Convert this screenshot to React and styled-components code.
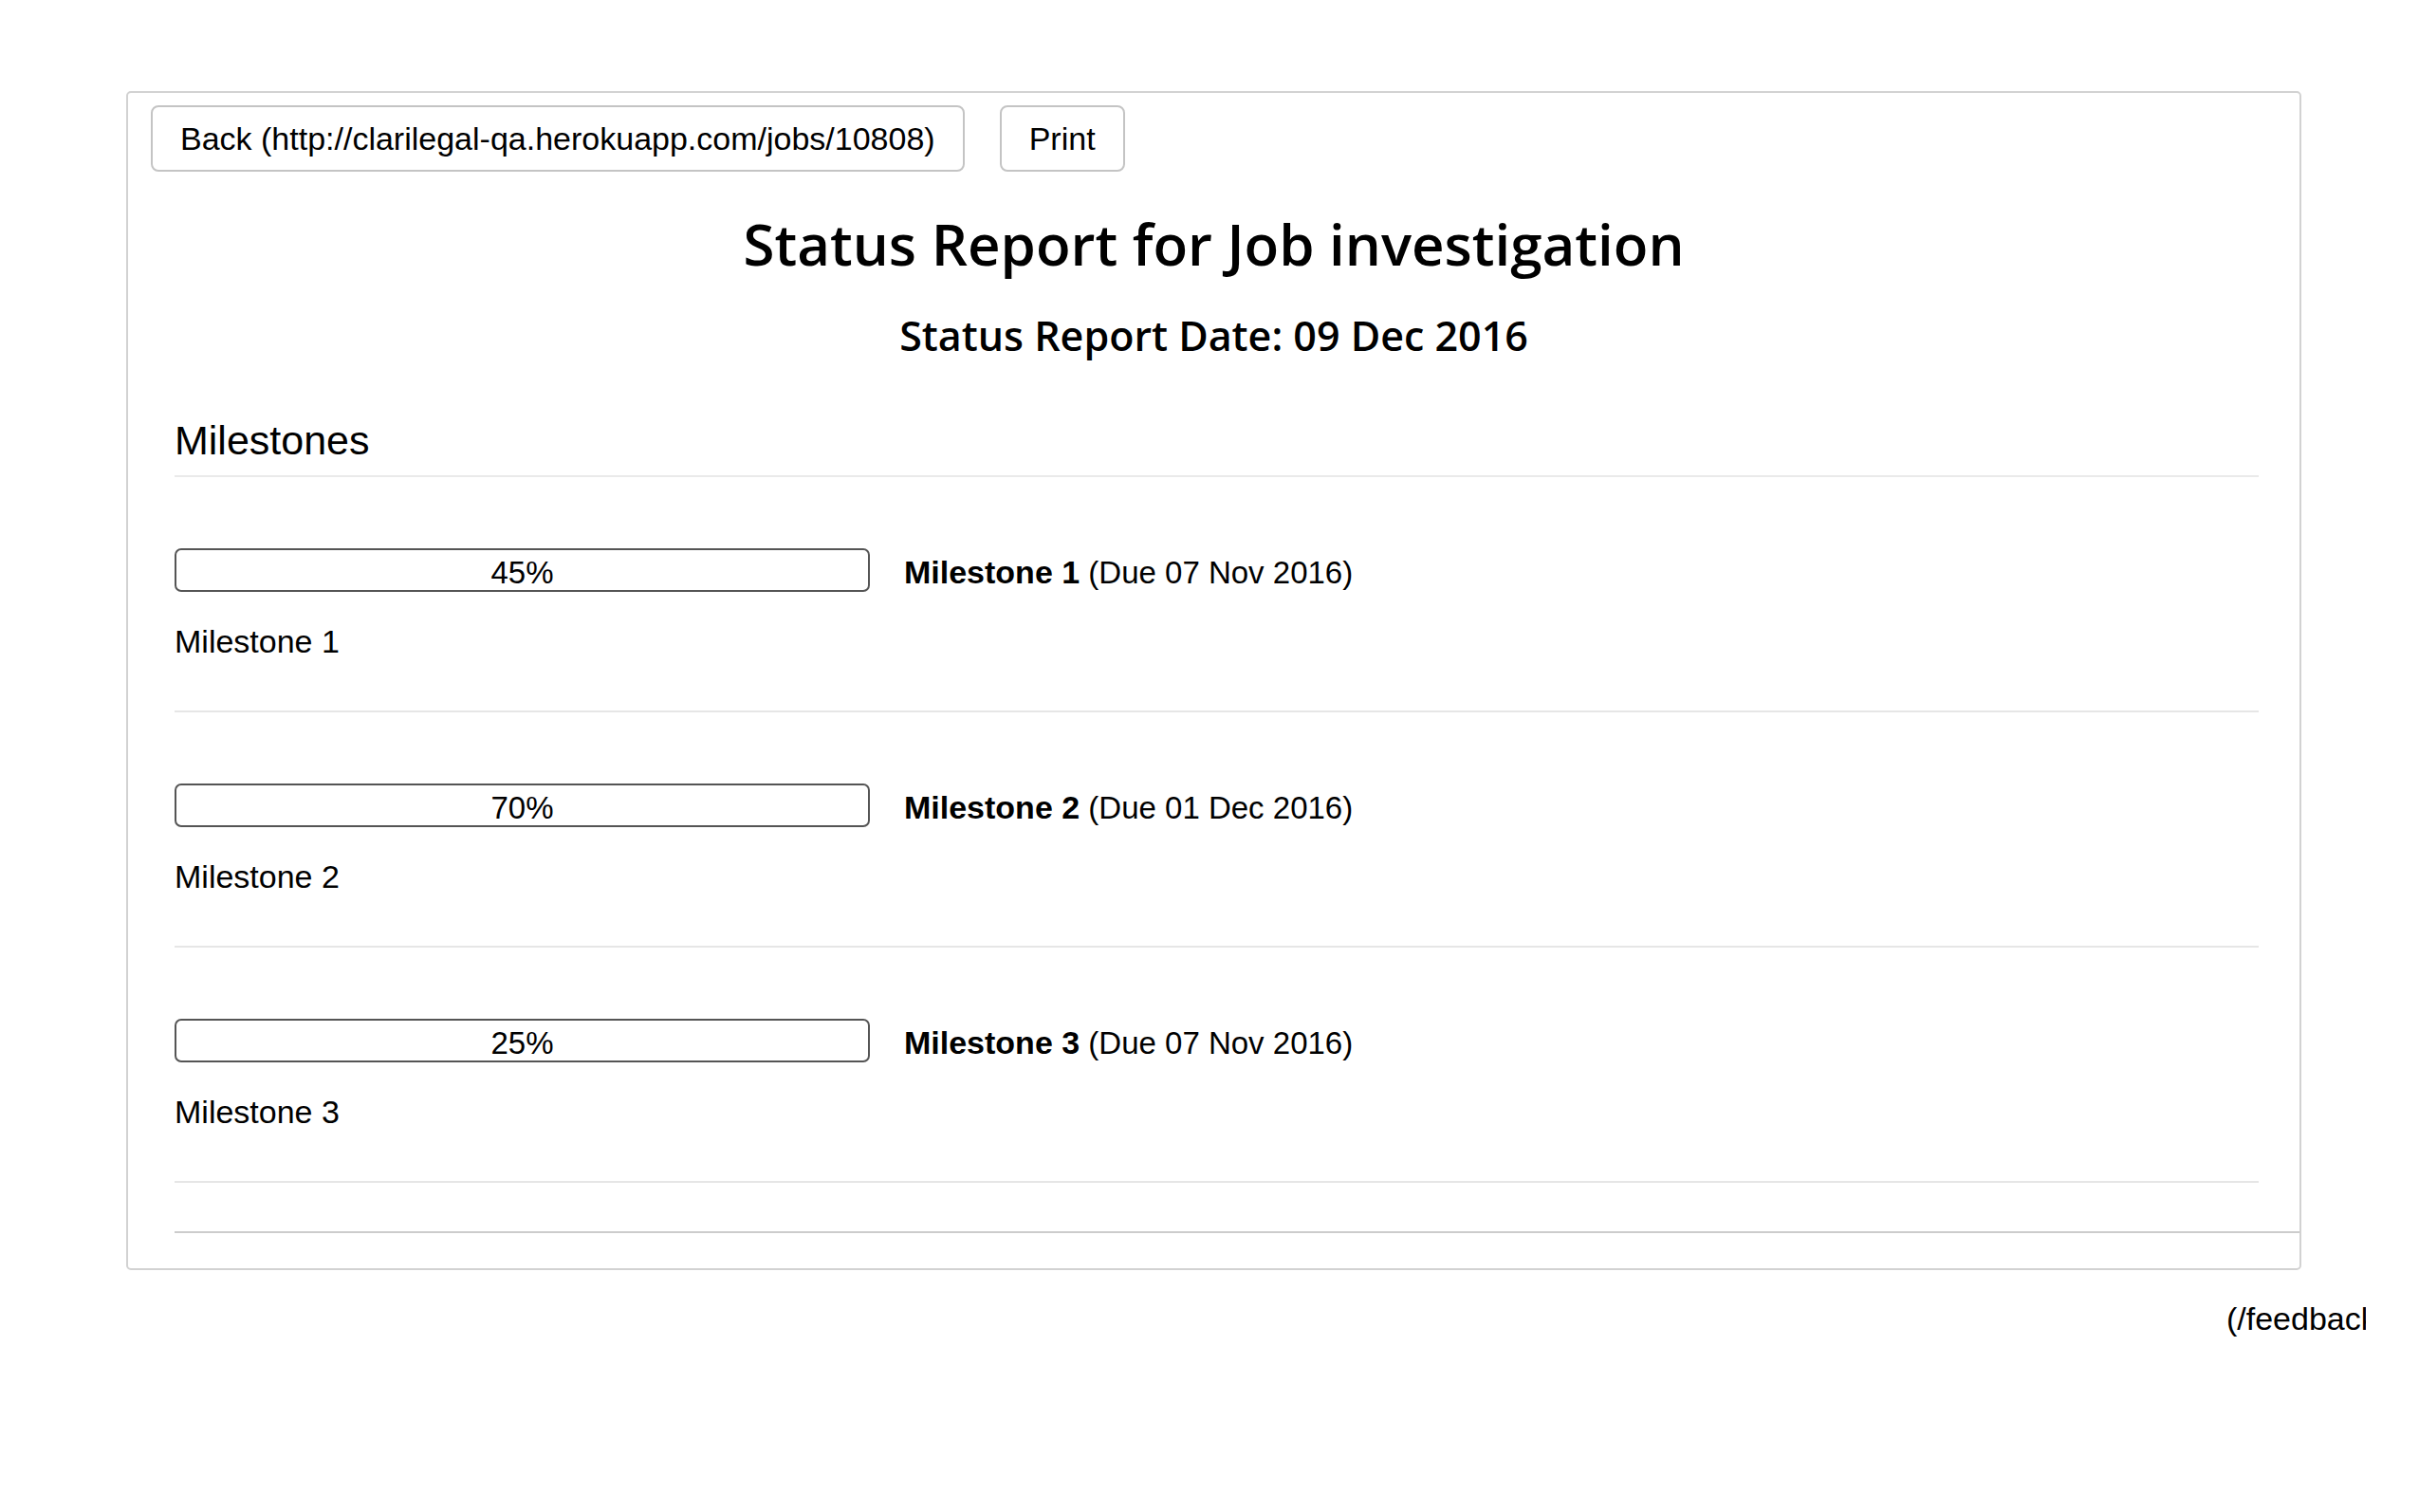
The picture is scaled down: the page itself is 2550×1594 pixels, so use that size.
import React from 'react';
import styled, { createGlobalStyle } from 'styled-components';

const GlobalStyle = createGlobalStyle`
  html, body {
    margin: 0;
    padding: 0;
    background: #fff;
    color: #000;
    font-family: "Liberation Sans", Arial, sans-serif;
    font-size: 34px;
  }
`;

let milestones = [
    { name: 'Milestone 1', due: '07 Nov 2016', percent: 45, description: 'Milestone 1' },
    { name: 'Milestone 2', due: '01 Dec 2016', percent: 70, description: 'Milestone 2' },
    { name: 'Milestone 3', due: '07 Nov 2016', percent: 25, description: 'Milestone 3' },
]

function App() {
    return (
        <Page>
            <GlobalStyle />
            <Panel>
                <Toolbar>
                    <Button>Back (http://clarilegal-qa.herokuapp.com/jobs/10808)</Button>
                    <Button>Print</Button>
                </Toolbar>
                <Title>Status Report for Job investigation</Title>
                <SubTitle>Status Report Date: 09 Dec 2016</SubTitle>
                <Content>
                    <SectionHeading>Milestones</SectionHeading>
                    {
                        milestones.map((m, id) => {
                            return <MilestoneRow key={id}>
                                <RowTop>
                                    <ProgressBar>{m.percent}%</ProgressBar>
                                    <MilestoneTitle>
                                        <b>{m.name}</b> (Due {m.due})
                                    </MilestoneTitle>
                                </RowTop>
                                <Description>{m.description}</Description>
                            </MilestoneRow>
                        })
                    }
                    <EndRule />
                </Content>
            </Panel>
            <Footer>
                <FeedbackLink>(/feedback)</FeedbackLink>
            </Footer>
        </Page>
    );
}

export default App;

let Page = styled.div`
    padding: 96px 0 160px 133px;
`

let Panel = styled.div`
    box-sizing: border-box;
    width: 2293px;
    border: 2px solid #d2d2d2;
    border-radius: 5px;
    padding: 13px 0 37px 0;
`

let Toolbar = styled.div`
    display: flex;
    gap: 37px;
    padding-left: 24px;
`

let Button = styled.button`
    box-sizing: border-box;
    height: 70px;
    padding: 0 29px;
    background: #fff;
    border: 2px solid #c4c4c4;
    border-radius: 8px;
    font-family: "Liberation Sans", Arial, sans-serif;
    font-size: 34px;
    color: #000;
    cursor: pointer;
`

let Title = styled.h1`
    margin: 41px 0 0 0;
    text-align: center;
    font-family: "Open Sans", sans-serif;
    font-weight: 600;
    font-size: 60px;
    line-height: 70px;
`

let SubTitle = styled.h2`
    margin: 37px 0 0 0;
    text-align: center;
    font-family: "Open Sans", sans-serif;
    font-weight: 600;
    font-size: 43px;
    line-height: 50px;
`

let Content = styled.div`
    padding: 0 0 0 49px;
`

let SectionHeading = styled.h3`
    margin: 62px 43px 0 0;
    padding-bottom: 13px;
    border-bottom: 2px solid #eaeaea;
    font-weight: normal;
    font-size: 43px;
    line-height: 47px;
`

let MilestoneRow = styled.div`
    margin-right: 43px;
    padding: 75px 0 53px 0;
    border-bottom: 2px solid #e6e6e6;
`

let RowTop = styled.div`
    display: flex;
    align-items: baseline;
    gap: 36px;
`

let ProgressBar = styled.div`
    box-sizing: border-box;
    width: 733px;
    height: 46px;
    padding-top: 6px;
    border: 2px solid #555;
    border-radius: 7px;
    text-align: center;
    font-size: 33px;
    line-height: 36px;
`

let MilestoneTitle = styled.div`
    font-size: 33px;
    line-height: 40px;
    b {
        font-weight: bold;
        font-size: 34px;
    }
`

let Description = styled.div`
    margin-top: 32px;
    line-height: 40px;
`

let EndRule = styled.div`
    margin-top: 51px;
    border-top: 2px solid #cccccc;
`

let Footer = styled.div`
    display: flex;
    justify-content: flex-end;
    width: 2361px;
    margin-top: 31px;
`

let FeedbackLink = styled.div`
    width: 147px;
    overflow: hidden;
    white-space: nowrap;
    line-height: 40px;
`
